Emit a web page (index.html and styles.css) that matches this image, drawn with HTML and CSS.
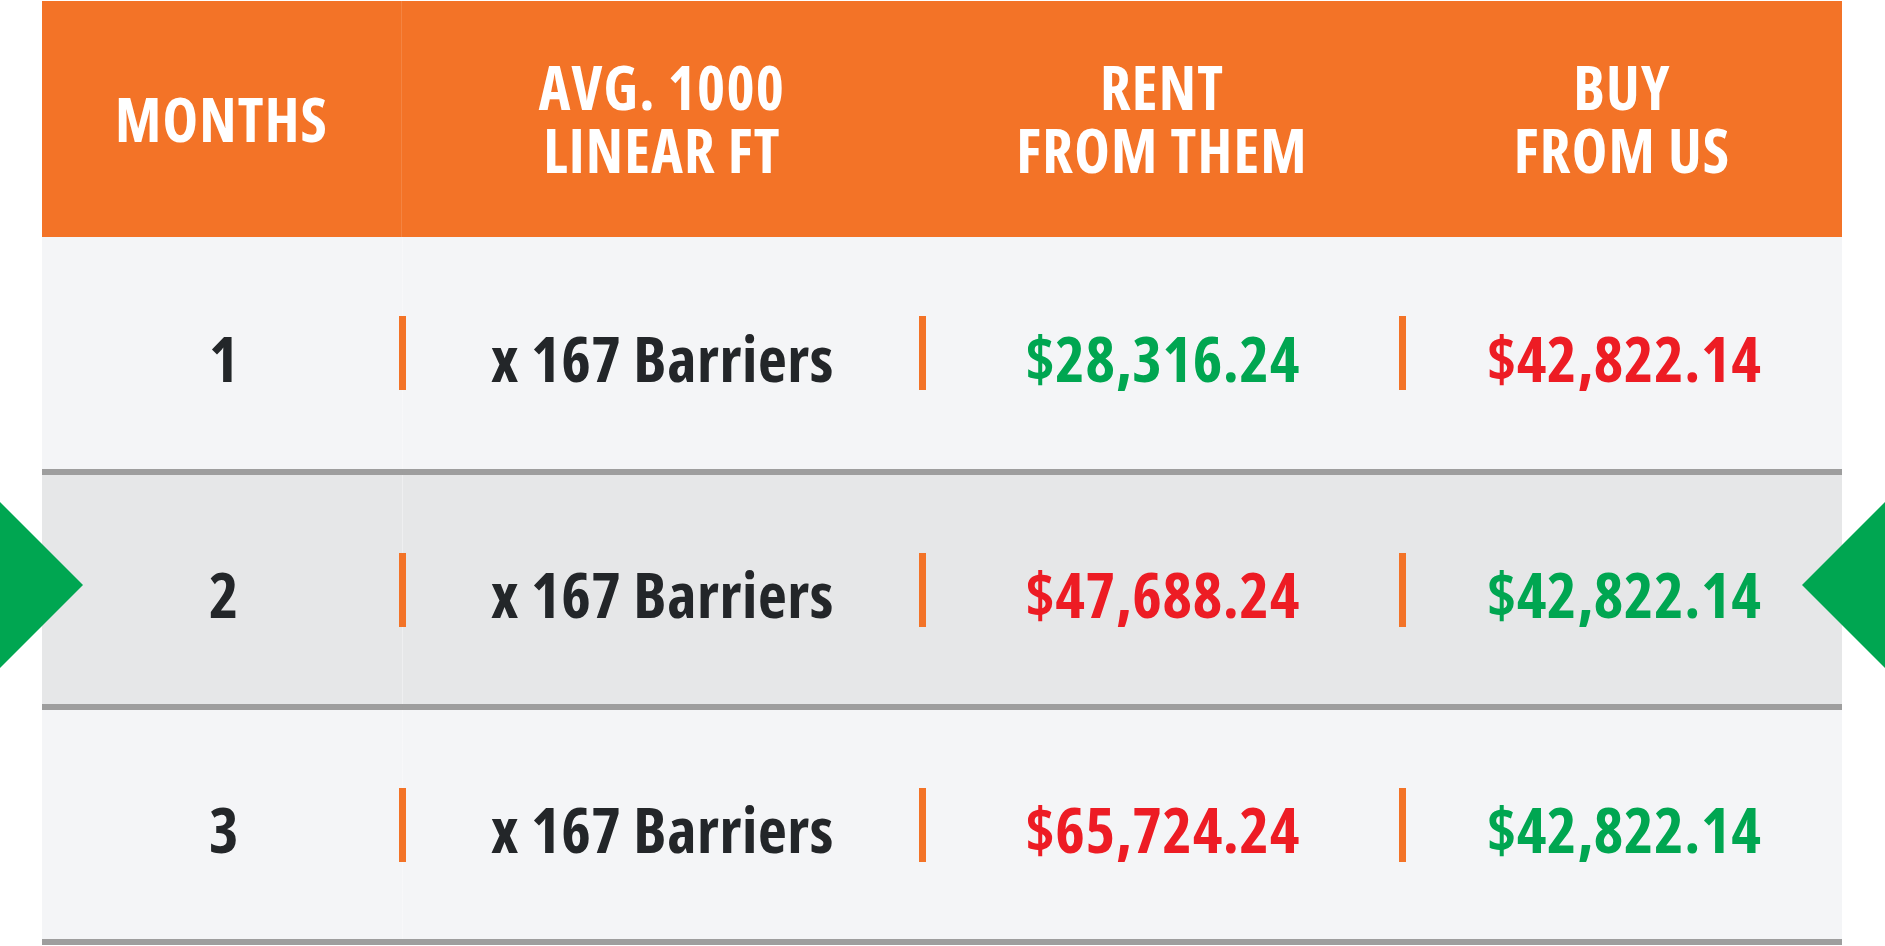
FILE: index.html
```html
<!DOCTYPE html>
<html lang="en">
<head>
<meta charset="utf-8">
<title>Rent vs Buy</title>
<link rel="stylesheet" href="styles.css">
</head>
<body>
<div class="page">
  <div class="table">
    <div class="head">
      <div class="hcell first"><span class="hline">MONTHS</span></div>
      <div class="hcell"><span class="hline">AVG. 1000</span><span class="hline">LINEAR FT</span></div>
      <div class="hcell"><span class="hline">RENT</span><span class="hline">FROM THEM</span></div>
      <div class="hcell"><span class="hline">BUY</span><span class="hline">FROM US</span></div>
    </div>

    <div class="row top">
      <div class="cell num">1</div>
      <div class="bar-col first"><span class="bar"></span></div>
      <div class="cell">x 167 Barriers</div>
      <div class="bar-col"><span class="bar"></span></div>
      <div class="cell green">$28,316.24</div>
      <div class="bar-col"><span class="bar"></span></div>
      <div class="cell red">$42,822.14</div>
    </div>

    <div class="row highlight">
      <svg class="pointer left" viewBox="0 0 84 166" width="84" height="166"><polygon points="0,0 83,83 0,166" fill="#00a651"/></svg>
      <div class="cell num">2</div>
      <div class="bar-col first"><span class="bar"></span></div>
      <div class="cell">x 167 Barriers</div>
      <div class="bar-col"><span class="bar"></span></div>
      <div class="cell red">$47,688.24</div>
      <div class="bar-col"><span class="bar"></span></div>
      <div class="cell green">$42,822.14</div>
      <svg class="pointer right" viewBox="0 0 84 166" width="84" height="166"><polygon points="84,0 1,83 84,166" fill="#00a651"/></svg>
    </div>

    <div class="row">
      <div class="cell num">3</div>
      <div class="bar-col first"><span class="bar"></span></div>
      <div class="cell">x 167 Barriers</div>
      <div class="bar-col"><span class="bar"></span></div>
      <div class="cell red">$65,724.24</div>
      <div class="bar-col"><span class="bar"></span></div>
      <div class="cell green">$42,822.14</div>
    </div>
  </div>
</div>
</body>
</html>
```
FILE: styles.css
```css
html, body {
  margin: 0;
  padding: 0;
  background: #ffffff;
}

body {
  font-family: "Open Sans", "DejaVu Sans", sans-serif;
  font-stretch: 75%;
  font-weight: 700;
  overflow: hidden;
}

.page {
  width: 1885px;
  height: 946px;
  padding-top: 1px;
  box-sizing: border-box;
}

.table {
  margin-left: 42px;
  width: 1800px;
}

.head {
  display: grid;
  grid-template-columns: 360px 520px 480px 440px;
  height: 236px;
  background: #f37327;
}

.hcell {
  display: flex;
  flex-direction: column;
  align-items: center;
  justify-content: center;
  text-align: center;
  color: #ffffff;
  font-size: 60px;
  letter-spacing: 1.2px;
}

.hline {
  display: block;
  height: 63px;
  line-height: 63px;
  white-space: nowrap;
}

.hcell.first {
  border-right: 1px solid rgba(255, 255, 255, 0.12);
}

.row {
  position: relative;
  display: grid;
  grid-template-columns: 357px 7px 513px 7px 473px 7px 436px;
  height: 229px;
  background: #f4f5f7;
  border-bottom: 6px solid #9e9e9e;
}

.row.top {
  height: 232px;
}

.row.highlight {
  background: #e6e7e8;
}

.cell {
  display: flex;
  align-items: center;
  justify-content: center;
  padding-top: 8px;
  box-sizing: border-box;
  font-size: 63px;
  line-height: 1;
  letter-spacing: 0.6px;
  color: #232629;
  white-space: nowrap;
}

.cell.num {
  padding-left: 7px;
}

.cell.green {
  color: #00a651;
}

.cell.red {
  color: #ed1c24;
}

.bar-col {
  display: flex;
  align-items: center;
  justify-content: center;
}

.bar-col.first {
  background: linear-gradient(to right, transparent 3px, rgba(255, 255, 255, 0.35) 3px, rgba(255, 255, 255, 0.35) 4px, transparent 4px);
}

.bar {
  display: block;
  width: 7px;
  height: 74px;
  background: #f37327;
}

.pointer {
  position: absolute;
  top: 27px;
  display: block;
}

.pointer.left {
  left: -42px;
}

.pointer.right {
  right: -43px;
}
```
